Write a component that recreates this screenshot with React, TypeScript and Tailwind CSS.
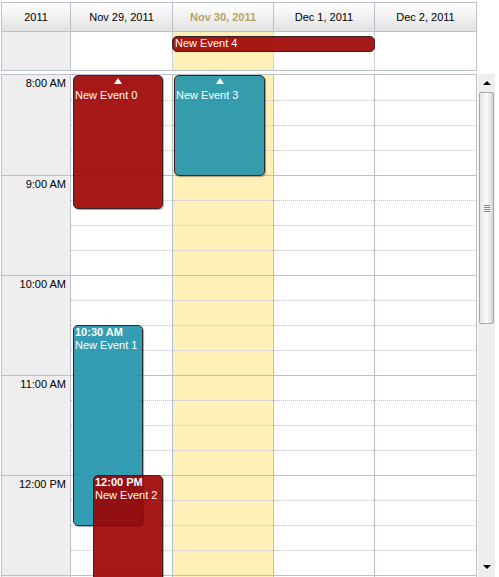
import React from 'react';

const days = [
  { label: 'Nov 29, 2011', today: false, w: 'w-[102px] border-r' },
  { label: 'Nov 30, 2011', today: true, w: 'w-[101px] border-r' },
  { label: 'Dec 1, 2011', today: false, w: 'w-[101px] border-r' },
  { label: 'Dec 2, 2011', today: false, w: 'w-[101px]' },
];

// last slot is only partly visible, so it has no label
const hours = ['8:00 AM', '9:00 AM', '10:00 AM', '11:00 AM', '12:00 PM', ''];

interface CalEvent {
  day: number;
  name: string;
  time?: string;
  startsBefore?: boolean;
  bg: string;
  box: string;
}

const events: CalEvent[] = [
  { day: 0, name: 'New Event 0', startsBefore: true, bg: 'bg-[rgba(156,0,0,0.9)]', box: 'left-[2px] top-0 w-[90px] h-[134px]' },
  { day: 0, name: 'New Event 1', time: '10:30 AM', bg: 'bg-[rgba(31,146,171,0.9)]', box: 'left-[2px] top-[250px] w-[70px] h-[201px]' },
  { day: 0, name: 'New Event 2', time: '12:00 PM', bg: 'bg-[rgba(156,0,0,0.9)]', box: 'left-[22px] top-[400px] w-[70px] h-[200px]' },
  { day: 1, name: 'New Event 3', startsBefore: true, bg: 'bg-[rgba(31,146,171,0.9)]', box: 'left-[1px] top-0 w-[91px] h-[101px]' },
];

const HourBlock: React.FC<{ first: boolean; dotted: boolean; children?: React.ReactNode }> = ({ first, dotted, children }) => (
  <div className={`h-[100px] shrink-0 flex flex-col ${first ? '' : 'border-t border-[#bcc0cc]'}`}>
    {dotted ? (
      <>
        <div className="flex-1" />
        <div className="h-[25px] border-t border-dotted border-[#c6c0c8]" />
        <div className="h-[25px] border-t border-dotted border-[#c6c0c8]" />
        <div className="h-[25px] border-t border-dotted border-[#c6c0c8]" />
      </>
    ) : (
      children
    )}
  </div>
);

const EventBox: React.FC<{ ev: CalEvent }> = ({ ev }) => (
  <div
    className={`absolute ${ev.box} ${ev.bg} border border-[#3a2222] rounded-[5px] shadow-[1px_1px_1px_rgba(0,0,0,0.35)] text-white leading-[13px] px-[1px] overflow-hidden`}
  >
    {ev.startsBefore ? (
      <div className="h-[13px] flex justify-center pt-[2px]">
        <div className="w-0 h-0 border-x-[4px] border-x-transparent border-b-[6px] border-b-white" />
      </div>
    ) : (
      <div className="font-bold">{ev.time}</div>
    )}
    <div>{ev.name}</div>
  </div>
);

export default function App() {
  return (
    <div className="w-[499px] h-[577px] bg-white overflow-hidden pt-[2px] pl-[1px] text-[11px] text-black font-['Liberation_Sans',Arial,sans-serif]">
      {/* header + all-day */}
      <div className="w-[476px] border border-[#bcc0cc]">
        <div className="flex h-[29px] border-b border-[#bcc0cc]">
          <div className="w-[69px] border-r border-[#bcc0cc] bg-gradient-to-b from-white to-[#e2e2e2] flex items-center justify-center">
            2011
          </div>
          {days.map(d => (
            <div
              key={d.label}
              className={`${d.w} border-[#bcc0cc] bg-gradient-to-b from-white to-[#e2e2e2] flex items-center justify-center ${d.today ? 'font-bold text-[#b9a466]' : ''}`}
            >
              {d.label}
            </div>
          ))}
        </div>
        <div className="relative flex h-[38px]">
          <div className="w-[69px] border-r border-[#bcc0cc] bg-[#eeeeee]" />
          {days.map(d => (
            <div key={d.label} className={`${d.w} border-[#cfd2da] ${d.today ? 'bg-[#fff0b8]' : ''}`} />
          ))}
          <div className="absolute left-[170px] top-[4px] w-[203px] h-[16px] bg-[rgba(156,0,0,0.9)] border border-[#3a2222] rounded-[5px] text-white leading-[13px] px-[2px]">
            New Event 4
          </div>
        </div>
      </div>

      <div className="h-[3px]" />

      {/* scrolling day grid */}
      <div className="flex h-[503px]">
        <div className="w-[476px] border-l border-t border-r border-[#bcc0cc] overflow-hidden flex">
          <div className="w-[69px] border-r border-[#bcc0cc] bg-[#eeeeee] flex flex-col">
            {hours.map((h, i) => (
              <HourBlock key={i} first={i === 0} dotted={false}>
                {h && <div className="text-right pr-[4px] pt-[2px] leading-[13px]">{h}</div>}
              </HourBlock>
            ))}
          </div>
          {days.map((d, di) => (
            <div key={d.label} className={`${d.w} border-[#bcc0cc] relative flex flex-col ${d.today ? 'bg-[#fff0b8]' : ''}`}>
              {hours.map((h, i) => (
                <HourBlock key={i} first={i === 0} dotted />
              ))}
              {events.filter(e => e.day === di).map(e => (
                <EventBox key={e.name} ev={e} />
              ))}
            </div>
          ))}
        </div>

        {/* scrollbar */}
        <div className="ml-[1px] w-[17px] bg-[#eeeeee] flex flex-col items-center">
          <div className="h-[18px] flex items-center justify-center">
            <div className="w-0 h-0 border-x-[4px] border-x-transparent border-b-[4px] border-b-black" />
          </div>
          <div className="w-[15px] h-[232px] border border-[#a8a8a8] rounded-[2px] bg-gradient-to-r from-[#e4e4e4] via-[#fbfbfb] to-[#d4d4d4] flex flex-col items-center justify-center gap-[1px]">
            <div className="w-[6px] h-[1px] bg-[#8a8a8a]" />
            <div className="w-[6px] h-[1px] bg-[#8a8a8a]" />
            <div className="w-[6px] h-[1px] bg-[#8a8a8a]" />
            <div className="w-[6px] h-[1px] bg-[#8a8a8a]" />
          </div>
          <div className="flex-1" />
          <div className="h-[18px] flex items-center justify-center pb-[3px]">
            <div className="w-0 h-0 border-x-[4px] border-x-transparent border-t-[4px] border-t-black" />
          </div>
        </div>
      </div>
    </div>
  );
}
